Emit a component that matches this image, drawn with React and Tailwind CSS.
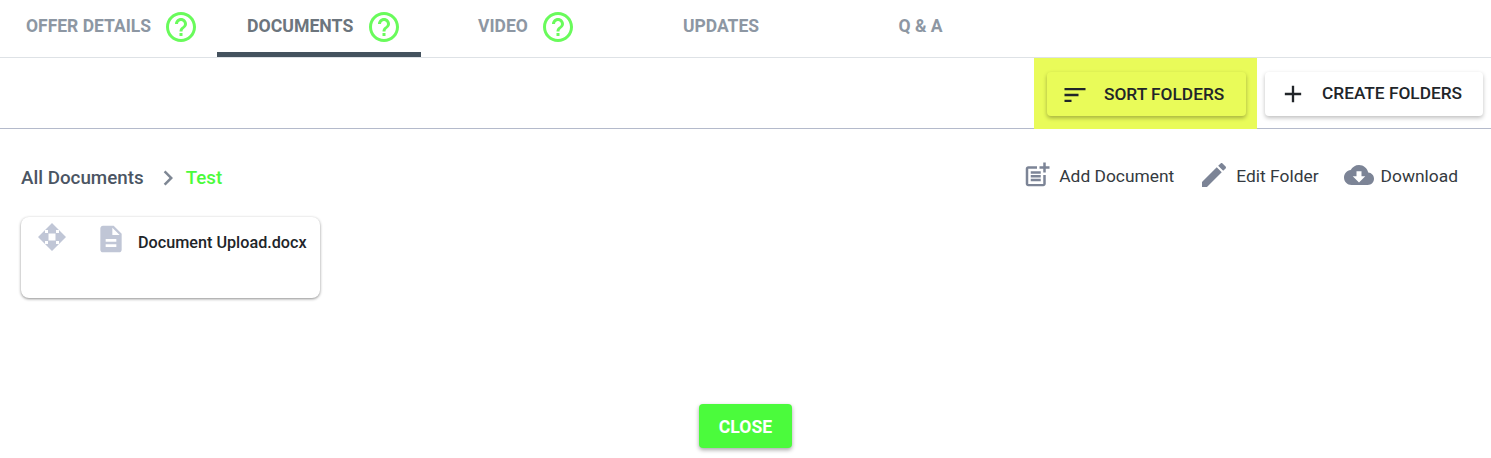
const MaterialIcon = ({ d, className }) => (
  <svg viewBox="0 0 24 24" fill="currentColor" className={className}>
    <path d={d} />
  </svg>
);

const HELP =
  "M11 18h2v-2h-2v2zm1-16C6.48 2 2 6.48 2 12s4.48 10 10 10 10-4.48 10-10S17.52 2 12 2zm0 18c-4.41 0-8-3.59-8-8s3.59-8 8-8 8 3.59 8 8-3.59 8-8 8zm0-14c-2.21 0-4 1.79-4 4h2c0-1.1.9-2 2-2s2 .9 2 2c0 2-3 1.75-3 5h2c0-2.25 3-2.5 3-5 0-2.21-1.79-4-4-4z";
const SORT = "M3 18h6v-2H3v2zM3 6v2h18V6H3zm0 7h12v-2H3v2z";
const PLUS = "M19 13h-6v6h-2v-6H5v-2h6V5h2v6h6v2z";
const POST_ADD =
  "M17 19.22H5V7h7V5H5c-1.1 0-2 .9-2 2v12c0 1.1.9 2 2 2h12c1.1 0 2-.9 2-2v-7h-2v7.22zM19 2h-2v3h-3c.01.01 0 2 0 2h3v2.99c.01.01 2 0 2 0V7h3V5h-3V2zM7 9h8v2H7zM7 12v2h8v-2h-3zM7 15h8v2H7z";
const EDIT =
  "M3 17.25V21h3.75L17.81 9.94l-3.75-3.75L3 17.25zM20.71 7.04c.39-.39.39-1.02 0-1.41l-2.34-2.34c-.39-.39-1.02-.39-1.41 0l-1.83 1.83 3.75 3.75 1.83-1.83z";
const CLOUD =
  "M19.35 10.04C18.67 6.59 15.64 4 12 4 9.11 4 6.6 5.64 5.35 8.04 2.34 8.36 0 10.91 0 14c0 3.31 2.69 6 6 6h13c2.76 0 5-2.24 5-5 0-2.64-2.05-4.78-4.65-4.96zM17 13l-5 5-5-5h3V9h4v4h3z";
const DOC =
  "M14 2H6c-1.1 0-1.99.9-1.99 2L4 20c0 1.1.89 2 1.99 2H18c1.1 0 2-.9 2-2V8l-6-6zm2 16H8v-2h8v2zm0-4H8v-2h8v2zm-3-5V3.5L18.5 9H13z";

function App() {
  return (
    <div
      className="h-[458px] w-[1491px] overflow-hidden bg-white text-[#212529]"
      style={{ fontFamily: "Roboto, sans-serif" }}
    >
      {/* tabs */}
      <div className="flex h-[58px] items-stretch border-b border-[#dee2e6] text-[17.5px] font-bold text-[#8d97a3]">
        <div className="flex w-[217px] items-center pb-[4px] pl-[26px]">
          <span>OFFER DETAILS</span>
          <MaterialIcon d={HELP} className="ml-[12px] h-[36px] w-[36px] text-[#69fb5b]" />
        </div>
        <div className="flex w-[204px] items-center border-b-[5px] border-[#44525e] pl-[30px] pt-[1px] text-[17.7px] text-[#6c757d]">
          <span>DOCUMENTS</span>
          <MaterialIcon d={HELP} className="ml-[13px] h-[36px] w-[36px] text-[#69fb5b]" />
        </div>
        <div className="flex w-[204px] items-center pb-[4px] pl-[57px]">
          <span>VIDEO</span>
          <MaterialIcon d={HELP} className="ml-[12px] h-[36px] w-[36px] text-[#69fb5b]" />
        </div>
        <div className="flex w-[192px] items-center justify-center pb-[4px]">UPDATES</div>
        <div className="flex w-[207px] items-center justify-center pb-[4px]">Q &amp; A</div>
      </div>

      {/* toolbar */}
      <div className="flex h-[71px] items-stretch justify-end border-b border-[#b4bacb] pr-[8px]">
        <div className="mb-[-1px] flex w-[223px] items-center bg-[#e9fb59] pl-[13px]">
          <button className="mt-[1px] flex h-[44px] w-[199px] items-center rounded bg-[#e9fb59] pl-[14px] pt-[1px] text-[17.3px] font-medium text-[#212529] shadow-[0_2px_4px_rgba(0,0,0,0.3)]">
            <MaterialIcon d={SORT} className="h-[28px] w-[28px]" />
            <span className="ml-[15px]">SORT FOLDERS</span>
          </button>
        </div>
        <div className="ml-[8px] flex items-center">
          <button className="mt-[1px] flex h-[44px] w-[218px] items-center rounded bg-white pl-[14px] pt-[1px] text-[17.3px] font-medium text-[#212529] shadow-[0_2px_4px_rgba(0,0,0,0.25)]">
            <MaterialIcon d={PLUS} className="h-[28px] w-[28px]" />
            <span className="ml-[15px]">CREATE FOLDERS</span>
          </button>
        </div>
      </div>

      {/* breadcrumb and actions */}
      <div className="flex h-[48px] items-center justify-between pl-[21px] pr-[33px] pt-[48px]">
        <div className="mt-[3px] flex items-center text-[18.8px] font-medium">
          <span className="text-[#4b5563]">All Documents</span>
          <svg viewBox="0 0 24 24" fill="currentColor" className="mb-[2px] ml-[9px] h-[30px] w-[30px] text-[#7e8794]">
            <path d="M10 6 8.59 7.41 13.17 12l-4.58 4.59L10 18l6-6z" />
          </svg>
          <span className="ml-[3px] text-[#4bfb3c]">Test</span>
        </div>
        <div className="mt-[-2px] flex items-center text-[17.4px] text-[#343a40]">
          <MaterialIcon d={POST_ADD} className="mb-[3px] h-[30px] w-[30px] text-[#7c8496]" />
          <span className="ml-[7px]">Add Document</span>
          <MaterialIcon d={EDIT} className="mb-[3px] ml-[24px] h-[32px] w-[32px] text-[#7c8496]" />
          <span className="ml-[6px]">Edit Folder</span>
          <MaterialIcon d={CLOUD} className="mb-[3px] ml-[25px] h-[30px] w-[30px] text-[#7c8496]" />
          <span className="ml-[7px]">Download</span>
        </div>
      </div>

      {/* card */}
      <div className="mt-[40px] pl-[21px]">
        <div className="flex h-[81px] w-[299px] items-start rounded-lg bg-white shadow-[0_1px_3px_rgba(0,0,0,0.45)]">
          <svg viewBox="0 0 28 28" fill="#c0c6d6" className="ml-[17px] mt-[6px] h-[28px] w-[28px]">
            <path d="M14 0l7 7h-3v3.500h-8V7H7zM14 28l-7-7h3v-3.500h8V21h3zM0 14l7-7v3h3.500v8H7v3zM28 14l-7 7v-3h-3.500v-8H21V7z" />
          </svg>
          <MaterialIcon d={DOC} className="ml-[29px] mt-[6px] h-[32px] w-[32px] text-[#c0c6d6]" />
          <span className="ml-[11px] mt-[16px] text-[16.2px] font-medium leading-[20px] text-[#212529]">
            Document Upload.docx
          </span>
        </div>
      </div>

      {/* footer */}
      <div className="mt-[106px] flex justify-center">
        <button className="h-[44px] w-[93px] rounded bg-[#4bfb3c] pt-[2px] text-[17.6px] font-bold text-white shadow-[0_2px_4px_rgba(0,0,0,0.35)]">
          CLOSE
        </button>
      </div>
    </div>
  );
}

export default App;
